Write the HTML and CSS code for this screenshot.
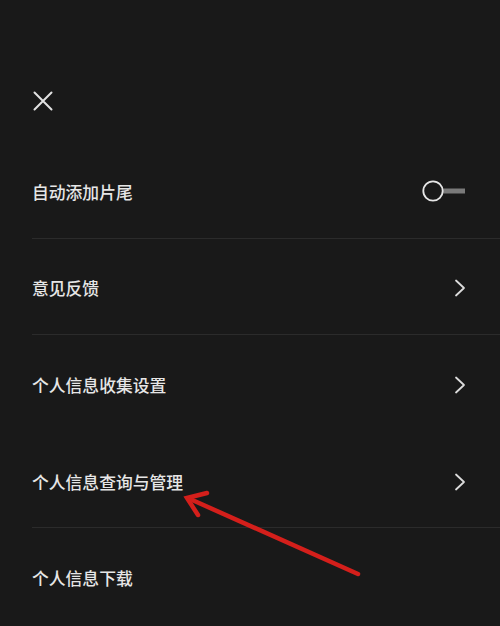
FILE: index.html
```html
<!DOCTYPE html>
<html lang="zh-CN">
<head>
<meta charset="utf-8">
<link rel="stylesheet" href="styles.css">
</head>
<body>
<div class="page">
  <header class="header">
    <svg class="close" width="20" height="20" viewBox="0 0 20 20">
      <path d="M1.5 1.5 L18.5 18.5 M18.5 1.5 L1.5 18.5" stroke="#e2e2e2" stroke-width="2" stroke-linecap="round" fill="none"/>
    </svg>
  </header>
  <ul class="list">
    <li class="row divided">
      <span class="label">自动添加片尾</span>
      <svg class="toggle" width="46" height="26" viewBox="0 0 46 26">
        <rect x="21" y="10.5" width="22" height="5" fill="#7a7a7a"/>
        <circle cx="11" cy="13" r="9.7" fill="#191919" stroke="#e6e6e6" stroke-width="1.8"/>
      </svg>
    </li>
    <li class="row divided">
      <span class="label">意见反馈</span>
      <svg class="chev" width="12" height="18" viewBox="0 0 12 18"><path d="M2 1.5 L10 9 L2 16.5" stroke="#dcdcdc" stroke-width="1.8" fill="none" stroke-linecap="round" stroke-linejoin="round"/></svg>
    </li>
    <li class="row">
      <span class="label">个人信息收集设置</span>
      <svg class="chev" width="12" height="18" viewBox="0 0 12 18"><path d="M2 1.5 L10 9 L2 16.5" stroke="#dcdcdc" stroke-width="1.8" fill="none" stroke-linecap="round" stroke-linejoin="round"/></svg>
    </li>
    <li class="row divided">
      <span class="label">个人信息查询与管理</span>
      <svg class="chev" width="12" height="18" viewBox="0 0 12 18"><path d="M2 1.5 L10 9 L2 16.5" stroke="#dcdcdc" stroke-width="1.8" fill="none" stroke-linecap="round" stroke-linejoin="round"/></svg>
    </li>
    <li class="row">
      <span class="label">个人信息下载</span>
    </li>
  </ul>
  <svg class="annot" width="500" height="626" viewBox="0 0 500 626">
    <path d="M358 574 L190 499" stroke="#d41f1b" stroke-width="4.5" stroke-linecap="round" fill="none"/>
    <path d="M207 493 L187 498 L198 515" stroke="#d41f1b" stroke-width="4.5" stroke-linecap="round" stroke-linejoin="miter" fill="none"/>
  </svg>
</div>
</body>
</html>
```
FILE: styles.css
```css
html, body {
  margin: 0;
  padding: 0;
  background: #191919;
}
.page {
  position: relative;
  width: 500px;
  height: 626px;
  overflow: hidden;
  font-family: "Noto Sans CJK SC", "Noto Sans", sans-serif;
  color: #e6e6e6;
}
.header {
  height: 142px;
  box-sizing: border-box;
  padding: 91px 0 0 33px;
}
.close {
  display: block;
}
.list {
  list-style: none;
  margin: 0;
  padding: 0;
}
.row {
  height: 96.6px;
  box-sizing: border-box;
  margin-left: 32px;
  padding-right: 34px;
  display: flex;
  align-items: center;
  justify-content: space-between;
  border-bottom: 1px solid transparent;
}
.row.divided {
  border-bottom-color: #2b2b2b;
}
.label {
  font-size: 16.8px;
  line-height: 20px;
  padding-top: 4px;
  font-weight: 500;
}
.toggle {
  display: block;
  margin-right: -2px;
  margin-top: 2px;
}
.chev {
  display: block;
  margin-top: 4px;
}
.annot {
  position: absolute;
  left: 0;
  top: 0;
  pointer-events: none;
}
```
